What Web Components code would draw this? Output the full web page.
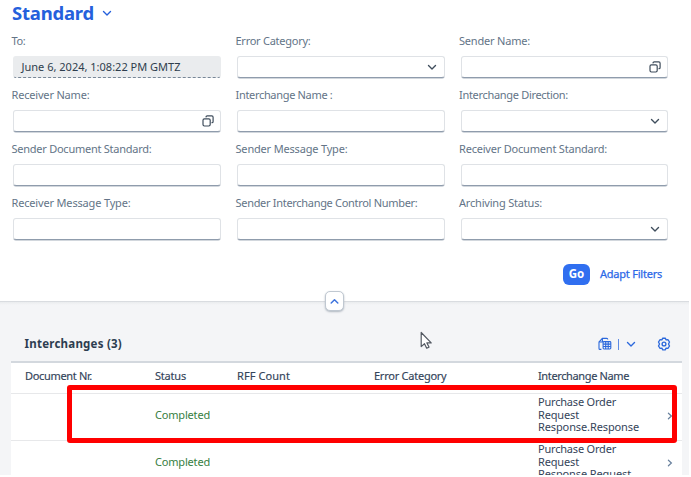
<!DOCTYPE html>
<html lang="en"><head><meta charset="utf-8"><title>Interchanges</title>
<style>
html,body{margin:0;background:#fff}
body{width:691px;height:477px;overflow:hidden;font:11px/14px "Noto Sans","Open Sans",sans-serif}
</style></head><body>
<monitor-page></monitor-page>
<script>
function define(name, html, after){
  customElements.define(name, class extends HTMLElement{
    connectedCallback(){
      if(this.shadowRoot) return;
      this.attachShadow({mode:'open'}).innerHTML = typeof html==='function' ? html(this) : html;
      if(after) after(this);
    }
  });
}
const icons = {
  down:'<svg width="10" height="7" viewBox="0 0 10 7"><path d="M1.5 1.6 5 4.9 8.5 1.6" fill="none" stroke="currentColor" stroke-width="1.4" stroke-linecap="round" stroke-linejoin="round"/></svg>',
  up:'<svg width="9" height="7" viewBox="0 0 9 7"><path d="M1.2 5 4.5 1.8 7.8 5" fill="none" stroke="currentColor" stroke-width="1.5" stroke-linecap="round" stroke-linejoin="round"/></svg>',
  right:'<svg width="6" height="8" viewBox="0 0 6 8"><path d="M1.4 1.2 4.4 4 1.4 6.8" fill="none" stroke="currentColor" stroke-width="1.2" stroke-linecap="round"/></svg>',
  help:'<svg width="12" height="12" viewBox="0 0 12 12" fill="none" stroke="currentColor" stroke-width="1.2"><rect x="1" y="3.8" width="7.2" height="7.2" rx="1.4"/><path d="M4 1.9Q4.1.9 5.2.9H9.8Q11.1.9 11.1 2.2V6.4Q11.1 7.7 10 7.7" stroke-linecap="round"/></svg>',
  sheet:'<svg width="14" height="14" viewBox="0 0 14 14" fill="none" stroke="currentColor" stroke-width="1.1"><path d="M3.4 12.4H2Q1 12.4 1 11.4V5L4.4 1.4H8.7Q9.8 1.4 9.8 2.6"/><path d="M4.4 1.6V5H1.2"/><rect x="5.1" y="4.6" width="7.7" height="7.4" rx=".9"/><path d="M5.1 7.1h7.7M5.1 9.5h7.7M7.7 4.6V12M10.2 4.6V12"/></svg>',
  gear:'<svg width="14" height="14" viewBox="0 0 14 14" fill="none" stroke="currentColor" stroke-width="1.35" stroke-linejoin="round"><path d="M5.6 1.2H8.4L9 2.9 10.9 2.6 12.5 5 11.5 7 12.5 9 10.9 11.4 9 11.1 8.4 12.8H5.6L5 11.1 3.1 11.4 1.5 9 2.5 7 1.5 5 3.1 2.6 5 2.9Z"/><circle cx="7" cy="7" r="1.9"/></svg>'
};
define('ui-icon', el=>`<style>:host{display:block;flex:none}svg{display:block}</style>${icons[el.getAttribute('name')]}`);

/* A single text line whose tracking is adjusted to occupy the width in "w". */
define('ui-text', `<style>:host{display:block;white-space:nowrap}span{display:inline-block;white-space:pre}</style><span><slot></slot></span>`, el=>{
  const s=el.shadowRoot.querySelector('span'), w=+el.getAttribute('w');
  requestAnimationFrame(()=>{
    s.style.letterSpacing=((w-s.getBoundingClientRect().width)/el.textContent.length)+'px';
  });
});
define('filter-field', el=>`<style>
:host{display:block;height:54px}
ui-text{color:#637487;margin:0 0 8px -1.5px}
.box{box-sizing:border-box;height:22px;border:1px solid #dfe2e6;border-bottom-color:#8f9cac;box-shadow:0 1px 0 -.3px #c3cad2;border-radius:3px;background:#fff;display:flex;align-items:center;justify-content:flex-end;padding-right:7px;color:#3f4d5c}
.box ui-icon[name=help]{margin-right:-1px}
:host([readonly]) .box{background:#eaecee;border-color:#eaecee;border-bottom:1px dashed #788797;box-shadow:none;justify-content:flex-start;padding-left:7.5px}
:host([readonly]) .box ui-text,::slotted(ui-text){color:#2e3d4d;padding-bottom:1px}
</style><ui-text w="${el.getAttribute('w')}">${el.getAttribute('label')}</ui-text>
<div class="box">${el.hasAttribute('icon')?`<ui-icon name="${el.getAttribute('icon')}"></ui-icon>`:''}<slot></slot></div>`);

define('filter-bar', `<style>
:host{display:block;box-sizing:border-box;height:301px;background:#fff;padding:3px 0 0 13px}
.title{display:flex;align-items:center;gap:8px;height:20px;margin-left:-1px;color:#2560dc}
.title ui-text{font:700 18.5px/20px "Noto Sans";width:82px}
.grid{display:grid;grid-template-columns:208px 207.5px 207.5px;column-gap:16px;padding-top:11px}
.actions{display:flex;align-items:center;justify-content:flex-end;gap:10px;padding-right:27px;margin-top:14px;color:#2b68e8}
.go{width:27px;height:21px;border-radius:6px;background:#306ff0;color:#fff;font-weight:700;font-size:11.5px;display:flex;align-items:center;justify-content:center}
.go ui-text{padding-bottom:1px}
.adapt{width:62px;padding-bottom:1px;-webkit-text-stroke:.25px}
</style>
<div class="title"><ui-text w="82">Standard</ui-text><ui-icon name="down"></ui-icon></div>
<div class="grid">
<filter-field label="To:" w="14" readonly><ui-text w="159">June 6, 2024, 1:08:22 PM GMTZ</ui-text></filter-field>
<filter-field label="Error Category:" w="75" icon="down"></filter-field>
<filter-field label="Sender Name:" w="71" icon="help"></filter-field>
<filter-field label="Receiver Name:" w="78" icon="help"></filter-field>
<filter-field label="Interchange Name :" w="97"></filter-field>
<filter-field label="Interchange Direction:" w="109" icon="down"></filter-field>
<filter-field label="Sender Document Standard:" w="140"></filter-field>
<filter-field label="Sender Message Type:" w="112"></filter-field>
<filter-field label="Receiver Document Standard:" w="148"></filter-field>
<filter-field label="Receiver Message Type:" w="119"></filter-field>
<filter-field label="Sender Interchange Control Number:" w="182"></filter-field>
<filter-field label="Archiving Status:" w="83" icon="down"></filter-field>
</div>
<div class="actions"><div class="go"><ui-text w="15.5">Go</ui-text></div><ui-text class="adapt" w="62">Adapt Filters</ui-text></div>`);

define('table-row', `<style>
:host{display:grid;grid-template-columns:130px 82px 137px 164px 1fr 15.5px;box-sizing:border-box;padding-left:14px;align-items:center;background:#fff;color:#33445a;border-bottom:1.5px solid #e7e8ea}
</style><slot></slot>`);
define('interchange-table', `<style>
:host{display:block;margin:0 7px 0 11px;border-top:2px solid #d3d8de}
.head{height:30.5px;padding-bottom:3px;-webkit-text-stroke:.15px}
.row{height:47px;padding-bottom:4px}
.ok{color:#37803f}
.name{line-height:12.5px;color:#35445a;padding-top:1px}
ui-icon{color:#68809d;justify-self:start;padding-top:2px}
</style>
<table-row class="head"><ui-text w="67">Document Nr.</ui-text><ui-text w="31">Status</ui-text><ui-text w="53">RFF Count</ui-text><ui-text w="72.5">Error Category</ui-text><ui-text w="91">Interchange Name</ui-text></table-row>
<table-row class="row"><i></i><ui-text class="ok" w="55">Completed</ui-text><i></i><i></i><div class="name"><ui-text w="78">Purchase Order</ui-text><ui-text w="41">Request</ui-text><ui-text w="101">Response.Response</ui-text></div><ui-icon name="right"></ui-icon></table-row>
<table-row class="row"><i></i><ui-text class="ok" w="55">Completed</ui-text><i></i><i></i><div class="name"><ui-text w="78">Purchase Order</ui-text><ui-text w="41">Request</ui-text><ui-text w="93">Response.Request</ui-text></div><ui-icon name="right"></ui-icon></table-row>`);

define('table-panel', `<style>
:host{display:block;background:linear-gradient(#eaecee,#f4f5f7 3px);height:174px;box-sizing:border-box;border-top:1px solid #d9dce0;overflow:hidden}
.bar{display:flex;align-items:center;height:34px;padding:25px 18.5px 0 24.5px;color:#2b68dc}
.bar .t{font-weight:700;font-size:11.5px;color:#2d3d50;margin-right:auto}
.sep{width:1.3px;height:11px;background:#5f8ce4;margin:0 7px 0 5.5px}
.gear{margin-left:20.5px}
</style><div class="bar"><ui-text class="t" w="97.5">Interchanges (3)</ui-text><ui-icon name="sheet"></ui-icon><span class="sep"></span><ui-icon name="down"></ui-icon><ui-icon class="gear" name="gear"></ui-icon></div><interchange-table></interchange-table>`);

define('monitor-page', `<style>
:host{display:block;position:relative;width:689px;height:475px;overflow:hidden}
.toggle{position:absolute;left:324.5px;top:291px;width:19px;height:20px;box-sizing:border-box;border:1px solid #c0c8d1;border-radius:5px;background:#fff;display:flex;align-items:center;justify-content:center;color:#3d73dd;box-shadow:0 1px 2px #aeb6bf}
.mark{position:absolute;left:67px;top:385px;width:610px;height:58px;box-sizing:border-box;border:5px solid red;border-radius:3px}
.cursor{position:absolute;left:420px;top:331px}
</style><filter-bar></filter-bar><table-panel></table-panel>
<div class="toggle"><ui-icon name="up"></ui-icon></div><div class="mark"></div>
<svg class="cursor" width="13" height="19" viewBox="0 0 13 19"><path d="M1.2 1.5V15.6L4.5 12.7 6.7 17.2 9 16.1 6.9 11.9H11.2Z" fill="#fff" stroke="#535962" stroke-width="1.2" stroke-linejoin="round"/></svg>`);
</script>
</body></html>
